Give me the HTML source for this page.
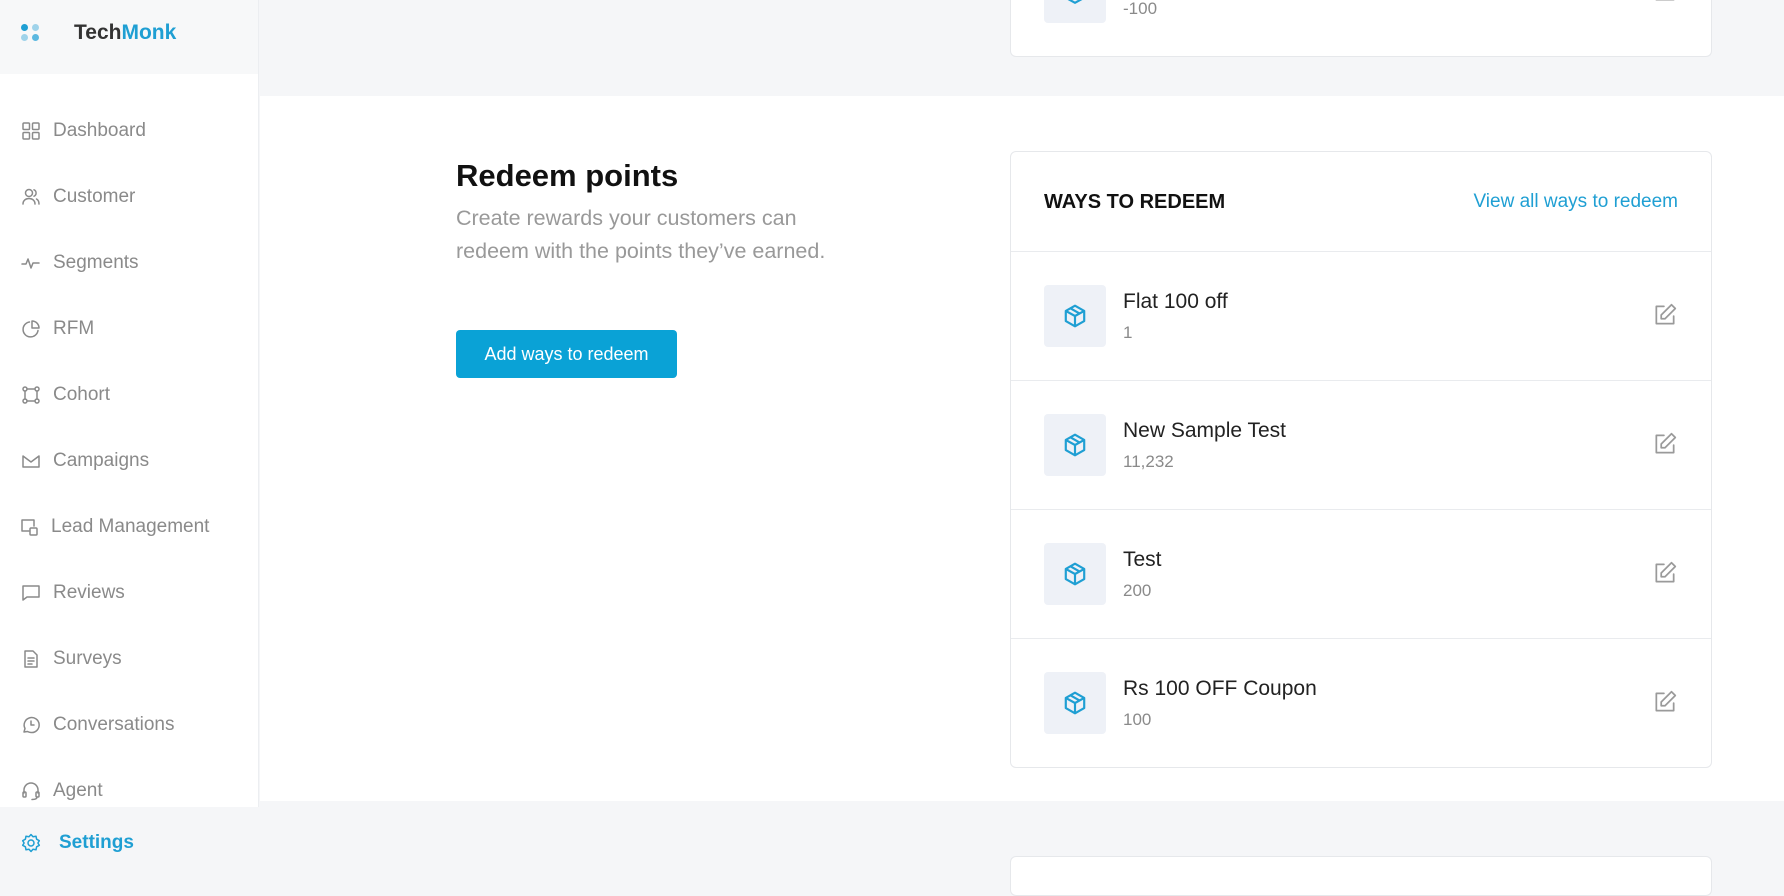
<!DOCTYPE html>
<html><head><meta charset="utf-8">
<style>
*{margin:0;padding:0;box-sizing:border-box}
body{width:1784px;height:861px;overflow:hidden;background:#f5f6f8;font-family:"Liberation Sans",sans-serif;position:relative}
.side{position:absolute;left:0;top:0;width:259px;height:861px;background:#fff;border-right:1px solid #eceef1}
.logo{height:74px;background:#f7f8f9;position:relative}
.dot{position:absolute;width:7px;height:7px;border-radius:50%}
.brand{position:absolute;left:74px;top:21px;font-size:21px;font-weight:bold;color:#333}
.brand span{color:#1f9fd3}
.item{position:absolute;left:0;width:259px;height:40px;display:flex;align-items:center;font-size:19px;color:#8a8a8a}
.item svg{position:absolute;left:21px;width:20px;height:20px;fill:none;stroke:#8a8a8a;stroke-width:1.5;stroke-linecap:round;stroke-linejoin:round}
.item span{position:absolute;left:53px}
.white{position:absolute;left:260px;top:96px;width:1524px;height:705px;background:#fff}
.card{position:absolute;background:#fff;border:1px solid #e6e8eb;border-radius:6px}
.row{position:absolute;left:0;right:0;height:129px;border-top:1px solid #e9ebee}
.ib{position:absolute;left:33px;width:62px;height:62px;background:#eef1f7;border-radius:4px;display:flex;align-items:center;justify-content:center}
.ib svg{width:26px;height:26px;fill:none;stroke:#1f9fd3;stroke-width:2;stroke-linejoin:round}
.t{position:absolute;left:112px;font-size:21px;color:#222}
.s{position:absolute;left:112px;font-size:17px;color:#8a8a8a}
.ed{position:absolute;right:33px;width:26px;height:26px;fill:none;stroke:#9a9a9a;stroke-width:1.6;stroke-linecap:round;stroke-linejoin:round}
</style></head><body>
<div class="side">
 <div class="logo">
  <div class="dot" style="left:21px;top:24px;background:#1f9fd3"></div>
  <div class="dot" style="left:32px;top:24px;background:#9fd3ea"></div>
  <div class="dot" style="left:21px;top:34px;background:#9fd3ea"></div>
  <div class="dot" style="left:32px;top:34px;background:#5bb8e0"></div>
  <div class="brand">Tech<span>Monk</span></div>
 </div>
 <div class="item" style="top:111px"><svg viewBox="0 0 20 20"><rect x="2" y="2" width="6.5" height="6.5" rx="1"/><rect x="11.5" y="2" width="6.5" height="6.5" rx="1"/><rect x="2" y="11.5" width="6.5" height="6.5" rx="1"/><rect x="11.5" y="11.5" width="6.5" height="6.5" rx="1"/></svg><span>Dashboard</span></div>
 <div class="item" style="top:177px"><svg viewBox="0 0 20 20"><circle cx="8" cy="6" r="3.5"/><path d="M2 17c0-3.5 2.7-5.5 6-5.5s6 2 6 5.5M13 2.8a3.5 3.5 0 010 6.4M15.5 12c1.5.8 2.5 2.6 2.5 5"/></svg><span>Customer</span></div>
 <div class="item" style="top:243px"><svg viewBox="0 0 20 20"><path d="M1 11h4l2-5 3 9 2-5h6"/></svg><span>Segments</span></div>
 <div class="item" style="top:309px"><svg viewBox="0 0 20 20"><path d="M17 11.5A7.5 7.5 0 118.5 3"/><path d="M11 2v7h7a7 7 0 00-7-7z"/></svg><span>RFM</span></div>
 <div class="item" style="top:375px"><svg viewBox="0 0 20 20"><circle cx="4" cy="4" r="2"/><circle cx="16" cy="4" r="2"/><circle cx="4" cy="16" r="2"/><circle cx="16" cy="16" r="2"/><path d="M6 4h8M6 16h8M4 6v8M16 6v8"/></svg><span>Cohort</span></div>
 <div class="item" style="top:441px"><svg viewBox="0 0 20 20"><path d="M2 5l8 6 8-6v11H2z"/></svg><span>Campaigns</span></div>
 <div class="item" style="top:507px"><svg viewBox="0 0 20 20" style="left:19px"><path d="M10 14H3V3h12v6"/><rect x="11" y="11" width="7" height="7" rx="1"/></svg><span style="left:51px">Lead Management</span></div>
 <div class="item" style="top:573px"><svg viewBox="0 0 20 20"><path d="M2 3h16v11H6l-4 3z"/></svg><span>Reviews</span></div>
 <div class="item" style="top:639px"><svg viewBox="0 0 20 20"><path d="M4 2h8l4 4v12H4z M7 9h6M7 12h6M7 15h4"/></svg><span>Surveys</span></div>
 <div class="item" style="top:705px"><svg viewBox="0 0 20 20"><path d="M3 17l1-3.5A7.5 7.5 0 1110 17.5 7.4 7.4 0 016.5 16.5z"/><path d="M10 6v4h3"/></svg><span>Conversations</span></div>
 <div class="item" style="top:771px"><svg viewBox="0 0 20 20"><path d="M3 12V9a7 7 0 0114 0v3"/><rect x="2" y="11" width="3" height="5" rx="1"/><rect x="15" y="11" width="3" height="5" rx="1"/><path d="M16 16c0 2-2 2.5-5 2.5"/></svg><span>Agent</span></div>
 <div style="position:absolute;left:0;top:807px;width:259px;height:54px;background:#f5f6f8"></div>
 <div class="item" style="top:823px;color:#1f9fd3;font-weight:bold"><svg viewBox="0 0 20 20" style="stroke:#1f9fd3"><circle cx="10" cy="10" r="3"/><path d="M10 1.5l2 2.2 3-.5.6 3 2.7 1.5-1.4 2.3 1.4 2.3-2.7 1.5-.6 3-3-.5-2 2.2-2-2.2-3 .5-.6-3L1.7 12.3 3.1 10 1.7 7.7l2.7-1.5.6-3 3 .5z"/></svg><span style="left:59px">Settings</span></div>
</div>

<div class="white"></div>

<div class="card" style="left:1010px;top:-20px;width:702px;height:77px;border-top:none">
 <div class="ib" style="top:-19px"><svg viewBox="0 0 24 24"><path d="M12 2l9 5v10l-9 5-9-5V7z"/></svg></div>
 <div class="s" style="left:112px;top:19px">-100</div>
 <svg class="ed" viewBox="0 0 24 24" style="top:-2px"><path d="M20 13v7H4V4h7"/></svg>
</div>

<div style="position:absolute;left:456px;top:158px;font-size:31px;font-weight:bold;color:#111">Redeem points</div>
<div style="position:absolute;left:456px;top:202px;font-size:21.5px;line-height:33px;color:#999">Create rewards your customers can<br>redeem with the points they’ve earned.</div>
<div style="position:absolute;left:456px;top:330px;width:221px;height:48px;background:#0aa2d6;border-radius:4px;color:#fff;font-size:18px;display:flex;align-items:center;justify-content:center">Add ways to redeem</div>

<div class="card" style="left:1010px;top:151px;width:702px;height:617px">
 <div style="position:absolute;left:33px;top:39px;font-size:20px;font-weight:bold;color:#111">WAYS TO REDEEM</div>
 <div style="position:absolute;right:33px;top:39px;font-size:19px;color:#1f9fd3">View all ways to redeem</div>
 <div class="row" style="top:99px"><div class="ib" style="top:33px"><svg viewBox="0 0 24 24"><path d="M12 2.5l8.5 4.8v9.4L12 21.5l-8.5-4.8V7.3z"/><path d="M3.5 7.3L12 12l8.5-4.7M12 12v9.5M7.8 4.9l8.5 4.8"/></svg></div><div class="t" style="top:38px">Flat 100 off</div><div class="s" style="top:71px">1</div><svg class="ed" viewBox="0 0 24 24" style="top:50px"><path d="M20 13v7H4V4h7"/><path d="M18 2.5l3.5 3.5L12 15.5H8.5V12z"/></svg></div>
 <div class="row" style="top:228px"><div class="ib" style="top:33px"><svg viewBox="0 0 24 24"><path d="M12 2.5l8.5 4.8v9.4L12 21.5l-8.5-4.8V7.3z"/><path d="M3.5 7.3L12 12l8.5-4.7M12 12v9.5M7.8 4.9l8.5 4.8"/></svg></div><div class="t" style="top:38px">New Sample Test</div><div class="s" style="top:71px">11,232</div><svg class="ed" viewBox="0 0 24 24" style="top:50px"><path d="M20 13v7H4V4h7"/><path d="M18 2.5l3.5 3.5L12 15.5H8.5V12z"/></svg></div>
 <div class="row" style="top:357px"><div class="ib" style="top:33px"><svg viewBox="0 0 24 24"><path d="M12 2.5l8.5 4.8v9.4L12 21.5l-8.5-4.8V7.3z"/><path d="M3.5 7.3L12 12l8.5-4.7M12 12v9.5M7.8 4.9l8.5 4.8"/></svg></div><div class="t" style="top:38px">Test</div><div class="s" style="top:71px">200</div><svg class="ed" viewBox="0 0 24 24" style="top:50px"><path d="M20 13v7H4V4h7"/><path d="M18 2.5l3.5 3.5L12 15.5H8.5V12z"/></svg></div>
 <div class="row" style="top:486px"><div class="ib" style="top:33px"><svg viewBox="0 0 24 24"><path d="M12 2.5l8.5 4.8v9.4L12 21.5l-8.5-4.8V7.3z"/><path d="M3.5 7.3L12 12l8.5-4.7M12 12v9.5M7.8 4.9l8.5 4.8"/></svg></div><div class="t" style="top:38px">Rs 100 OFF Coupon</div><div class="s" style="top:71px">100</div><svg class="ed" viewBox="0 0 24 24" style="top:50px"><path d="M20 13v7H4V4h7"/><path d="M18 2.5l3.5 3.5L12 15.5H8.5V12z"/></svg></div>
</div>

<div class="card" style="left:1010px;top:856px;width:702px;height:40px"></div>
</body></html>
